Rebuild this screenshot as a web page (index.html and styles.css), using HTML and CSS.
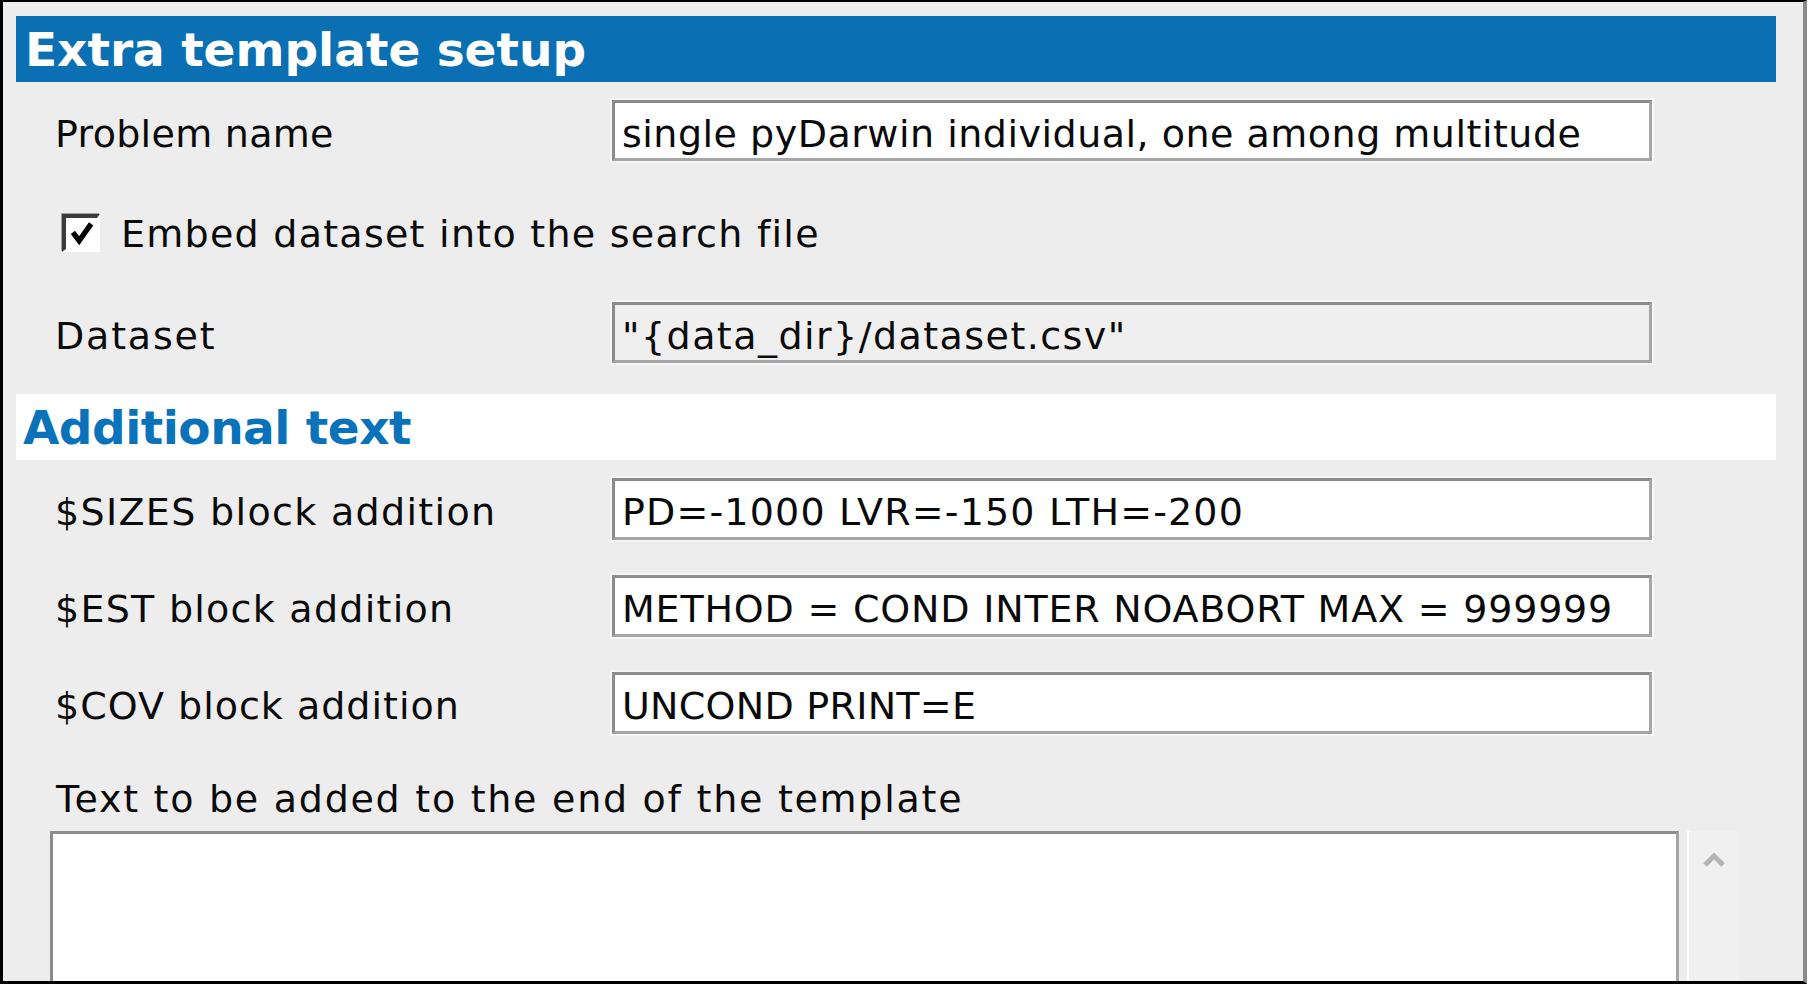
FILE: index.html
```html
<!DOCTYPE html>
<html>
<head>
<meta charset="utf-8">
<title>Extra template setup</title>
<link rel="stylesheet" href="styles.css">
</head>
<body>
<div class="window">
  <div class="section-header"><span class="section-title">Extra template setup</span></div>

  <div class="row row-first">
    <div class="label ls-problem">Problem name</div>
    <div class="field ls-single">single pyDarwin individual, one among multitude</div>
  </div>

  <div class="row check-row">
    <span class="checkbox">
      <svg viewBox="0 0 20 20" width="28" height="28"><path d="M3.5 9.5 L8 15.5 L16.5 3.5" fill="none" stroke="#000" stroke-width="3.8" stroke-linejoin="miter"/></svg>
    </span>
    <span class="check-label">Embed dataset into the search file</span>
  </div>

  <div class="row row-dataset">
    <div class="label ls-dataset">Dataset</div>
    <div class="field field-readonly ls-datadir">"{data_dir}/dataset.csv"</div>
  </div>

  <div class="section-band"><span class="band-title">Additional text</span></div>

  <div class="row row-block row-block-first">
    <div class="label ls-sizes">$SIZES block addition</div>
    <div class="field ls-pd">PD=-1000 LVR=-150 LTH=-200</div>
  </div>
  <div class="row row-block">
    <div class="label ls-est">$EST block addition</div>
    <div class="field ls-method">METHOD = COND INTER NOABORT MAX = 999999</div>
  </div>
  <div class="row row-block">
    <div class="label ls-cov">$COV block addition</div>
    <div class="field ls-uncond">UNCOND PRINT=E</div>
  </div>

  <div class="text-label">Text to be added to the end of the template</div>
  <div class="text-area-wrap">
    <div class="text-area"></div>
    <div class="scrollbar">
      <svg class="chev" viewBox="0 0 24 20" width="24" height="20"><path d="M3 16 L12 7 L21 16" fill="none" stroke="#b4b4b4" stroke-width="5"/></svg>
    </div>
  </div>
</div>
</body>
</html>
```

FILE: styles.css
```css
html, body {
  margin: 0;
  padding: 0;
  background: #ffffff;
}

body {
  width: 1812px;
  height: 985px;
  overflow: hidden;
  font-family: "DejaVu Sans", Verdana, sans-serif;
  color: #0a0a0a;
}

.window {
  box-sizing: border-box;
  width: 1807px;
  height: 984px;
  background: #ededed;
  border-left: 3px solid #000;
  border-top: 2px solid #000;
  border-bottom: 3px solid #000;
  border-right: 4px solid #8a8a8a;
  padding: 14px 27px 0 13px;
  overflow: hidden;
}

.section-header {
  height: 66px;
  background: #0b6fb3;
  display: flex;
  align-items: center;
  padding-left: 9px;
}

.section-title,
.band-title {
  font-family: "DejaVu Sans", Verdana, sans-serif;
  font-weight: bold;
  font-size: 47px;
  line-height: 1;
}

.section-title {
  color: #ffffff;
  letter-spacing: 0;
}

.section-band {
  margin-top: 31px;
  height: 66px;
  background: #ffffff;
  display: flex;
  align-items: center;
  padding-left: 7px;
}

.band-title {
  color: #0a72ba;
  letter-spacing: -0.5px;
}

.row {
  display: flex;
  align-items: center;
  height: 61px;
  margin-top: 41px;
  padding-left: 39px;
}

.row-first {
  margin-top: 18px;
}

.row-dataset {
  margin-top: 39px;
}

.row-block {
  height: 62px;
  margin-top: 35px;
}

.row-block-first {
  margin-top: 18px;
}

.label {
  width: 557px;
  padding-top: 6px;
  font-size: 38px;
  letter-spacing: 0.9px;
  white-space: nowrap;
}

.field {
  box-sizing: border-box;
  width: 1040px;
  height: 100%;
  background: #ffffff;
  border: 3px solid #a6a6a6;
  border-top-color: #8c8c8c;
  border-left-color: #8c8c8c;
  box-shadow: 0 0 0 2px #f6f6f6;
  padding-left: 7px;
  padding-top: 6px;
  display: flex;
  align-items: center;
  font-size: 38px;
  letter-spacing: 0.9px;
  white-space: nowrap;
  overflow: hidden;
}

.field-readonly {
  background: #efefef;
}

/* per-text spacing to match the original glyph widths */
.ls-problem { letter-spacing: 0.3px; }
.ls-dataset { letter-spacing: 1.8px; }
.ls-sizes { letter-spacing: 1.33px; }
.ls-est { letter-spacing: 1.26px; }
.ls-cov { letter-spacing: 1.0px; }
.ls-single { letter-spacing: 0.5px; }
.ls-datadir { letter-spacing: 1.45px; }
.ls-pd { letter-spacing: 1.16px; }
.ls-method { letter-spacing: 0.8px; }
.ls-uncond { letter-spacing: 0.27px; }

.check-row {
  padding-left: 46px;
}

.checkbox {
  box-sizing: border-box;
  width: 38px;
  height: 38px;
  background: #ffffff;
  border-style: solid;
  border-width: 4px 3px 3px 4px;
  border-color: #3c3c3c #ffffff #ffffff #3c3c3c;
  box-shadow: -1px -1px 0 #a0a0a0;
  display: flex;
  align-items: center;
  justify-content: center;
}

.check-label {
  margin-left: 21px;
  padding-top: 2px;
  font-size: 38px;
  letter-spacing: 1.26px;
  white-space: nowrap;
}

.text-label {
  margin-top: 45px;
  padding-left: 40px;
  height: 40px;
  line-height: 40px;
  font-size: 38px;
  letter-spacing: 1.73px;
  white-space: nowrap;
}

.text-area-wrap {
  display: flex;
  margin-top: 12px;
  padding-left: 34px;
}

.text-area {
  box-sizing: border-box;
  width: 1629px;
  height: 200px;
  background: #ffffff;
  border: 3px solid #a6a6a6;
  border-top-color: #8c8c8c;
  border-left-color: #8c8c8c;
}

.scrollbar {
  box-sizing: border-box;
  margin-left: 8px;
  width: 52px;
  height: 200px;
  background: #f0f0f0;
  border-left: 2px solid #ffffff;
  display: flex;
  justify-content: center;
  padding-top: 18px;
}

.chev {
  display: block;
}
```
